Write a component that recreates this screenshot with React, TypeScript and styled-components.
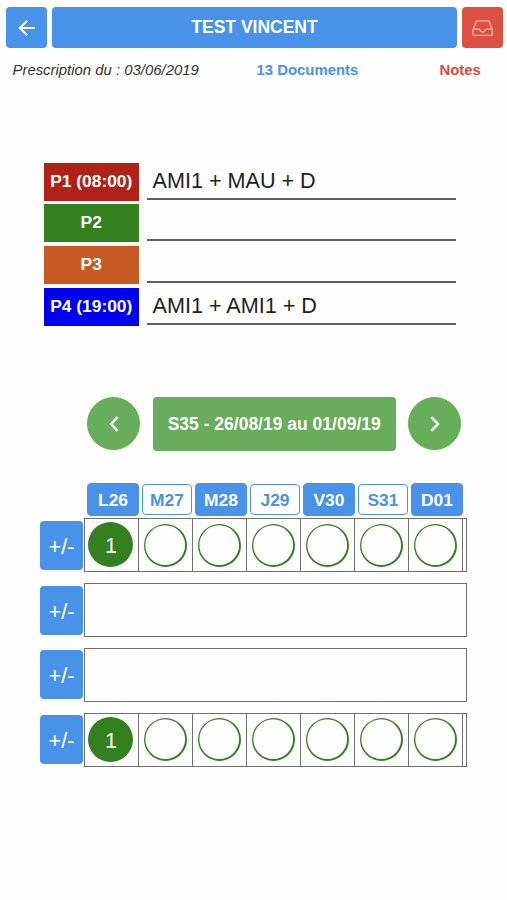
import React from "react";
import styled, { createGlobalStyle, css } from "styled-components";

const blue = "#4892e9";
const forest = "#34801f";

const GlobalStyle = createGlobalStyle`
  * { box-sizing: border-box; }
  body { margin: 0; background: #fefefe; }
`;

const Screen = styled.main`
  width: 507px;
  height: 900px;
  padding-top: 7px;
  overflow: hidden;
  background: #fefefe;
  font-family: "Liberation Sans", Arial, sans-serif;
  color: #222;
`;

const TopBar = styled.header`
  display: grid;
  grid-template-columns: 41px 405px 41px;
  column-gap: 5px;
  height: 41px;
  padding-left: 6px;
`;

const BarButton = styled.button<{ $tone?: string }>`
  display: flex;
  align-items: center;
  justify-content: center;
  height: 41px;
  padding: 0;
  border: 0;
  border-radius: 4px;
  background: ${(p) => p.$tone ?? blue};
  color: #fff;
  font: bold 17.5px "Liberation Sans", Arial, sans-serif;
`;

const SubBar = styled.div`
  display: grid;
  grid-template-columns: 244px 183px 1fr;
  padding-left: 12.5px;
  margin-top: 13px;
  font-size: 14.9px;
  line-height: 18px;
  white-space: nowrap;
`;

const DateLabel = styled.em`
  color: #333;
`;

const InfoLink = styled.a<{ $tone: string }>`
  color: ${(p) => p.$tone};
  font-weight: bold;
`;

const Passages = styled.section`
  display: flex;
  flex-direction: column;
  gap: 3.8px;
  margin: 83.5px 0 0 44px;
`;

const Passage = styled.div`
  display: grid;
  grid-template-columns: 94.5px 309px;
  column-gap: 8.5px;
  height: 38px;
`;

const PassageTag = styled.div<{ $tone: string }>`
  display: flex;
  align-items: center;
  justify-content: center;
  padding-bottom: 1px;
  background: ${(p) => p.$tone};
  color: #fff;
  font-size: 17.4px;
  font-weight: bold;
  white-space: nowrap;
`;

const PassageField = styled.div`
  display: flex;
  align-items: center;
  height: 37px;
  padding: 2px 0 0 5.5px;
  border-bottom: 2px solid #606060;
  font-size: 21.6px;
`;

const WeekNav = styled.nav`
  display: grid;
  grid-template-columns: 53px 243px 53px;
  column-gap: 12.7px;
  height: 54px;
  margin: 71.4px 0 0 87px;
`;

const weekFill = css`
  display: flex;
  align-items: center;
  justify-content: center;
  background: #67ad5b;
  color: #fff;
`;

const RoundButton = styled.button`
  ${weekFill}
  height: 53px;
  padding: 1px 0 0;
  border: 1px solid #55b83a;
  border-radius: 50%;
`;

const WeekLabel = styled.div`
  ${weekFill}
  padding-top: 1px;
  border-radius: 4px;
  font-size: 17.5px;
  font-weight: bold;
  white-space: nowrap;
`;

const Days = styled.div`
  display: grid;
  grid-template-columns: repeat(7, 54px);
  margin: 32px 0 0 87px;
`;

const Day = styled.div<{ $active: boolean }>`
  display: flex;
  align-items: center;
  justify-content: center;
  width: ${(p) => (p.$active ? 52 : 50)}px;
  height: ${(p) => (p.$active ? 33 : 31)}px;
  margin: ${(p) => (p.$active ? "0" : "1px 0 0 1px")};
  padding-top: 1px;
  border: 1px solid ${blue};
  border-radius: 4px;
  background: ${(p) => (p.$active ? blue : "#fff")};
  color: ${(p) => (p.$active ? "#fff" : blue)};
  font-size: 17.4px;
  font-weight: bold;
`;

const Schedule = styled.section`
  display: flex;
  flex-direction: column;
  gap: 10.8px;
  margin: 2px 0 0 40px;
`;

const ScheduleRow = styled.div`
  display: grid;
  grid-template-columns: 43px 383px;
  column-gap: 1px;
  align-items: center;
  height: 54px;
`;

const ToggleButton = styled.button`
  height: 49px;
  padding: 3px 0 0;
  border: 0;
  border-radius: 4px;
  background: ${blue};
  color: #fff;
  font: 21.6px "Liberation Sans", Arial, sans-serif;
`;

const Cells = styled.div`
  display: grid;
  grid-template-columns: repeat(7, 54px);
  height: 54px;
  border: 1px solid #717171;
`;

const Cell = styled.div`
  display: flex;
  align-items: center;
  padding-left: 5px;
  border-right: 1px solid #717171;
`;

const FilledDot = styled.div`
  display: flex;
  align-items: center;
  justify-content: center;
  width: 45px;
  height: 45px;
  margin: -1px 0 0 -1.6px;
  padding-top: 3px;
  border-radius: 50%;
  background: ${forest};
  color: #fff;
  font-size: 21.6px;
`;

const OpenDot = styled.svg`
  display: block;
  width: 43px;
  height: 43px;
`;

const days = ["L26", "M27", "M28", "J29", "V30", "S31", "D01"];

const passages = [
  { label: "P1 (08:00)", tone: "#b02118", text: "AMI1 + MAU + D", filled: true },
  { label: "P2", tone: forest, text: "", filled: false },
  { label: "P3", tone: "#c65a22", text: "", filled: false },
  { label: "P4 (19:00)", tone: "#0000f5", text: "AMI1 + AMI1 + D", filled: true },
];

const Ring = () => (
  <OpenDot viewBox="0 0 43 43" fill={forest} fillRule="evenodd">
    <path d="M21.5 0a21.5 21.5 0 1 0 0 43a21.5 21.5 0 1 0 0-43ZM21.2 1.3a19.9 19.9 0 1 1 0 39.8a19.9 19.9 0 1 1 0-39.8Z" />
  </OpenDot>
);

const Chevron = ({ d }: { d: string }) => (
  <svg width="12" height="18" viewBox="0 0 12 18" fill="none" stroke="#fff" strokeWidth="2.4">
    <path d={d} />
  </svg>
);

export default function App() {
  return (
    <>
      <GlobalStyle />
      <Screen>
        <TopBar>
          <BarButton aria-label="Retour">
            <svg width="18" height="18" viewBox="0 0 18 18" fill="none" stroke="#fff" strokeWidth="2">
              <path d="M9 1.8 1.9 9 9 16.2M2.1 9h14.6" />
            </svg>
          </BarButton>
          <BarButton>TEST VINCENT</BarButton>
          <BarButton $tone="#de5042" aria-label="Documents">
            <svg width="22" height="18" viewBox="0 0 22 18" fill="none" stroke="#f6bcb2" strokeWidth="1.3" strokeLinejoin="round">
              <path d="M1.2 10.2 4.6 1.8h12.2l3.4 8.4v6.1h-19ZM1.2 10.2h5.8c.7 0 1 .5 1.2 1.1.5 1.1 1.3 1.8 2.5 1.8s2-.7 2.5-1.8c.2-.6.5-1.1 1.2-1.1h5.8" />
            </svg>
          </BarButton>
        </TopBar>
        <SubBar>
          <DateLabel>Prescription du : 03/06/2019</DateLabel>
          <InfoLink $tone={blue}>13 Documents</InfoLink>
          <InfoLink $tone="#d94a40">Notes</InfoLink>
        </SubBar>
        <Passages>
          {passages.map((p) => (
            <Passage key={p.label}>
              <PassageTag $tone={p.tone}>{p.label}</PassageTag>
              <PassageField>{p.text}</PassageField>
            </Passage>
          ))}
        </Passages>
        <WeekNav>
          <RoundButton aria-label="Semaine précédente">
            <Chevron d="M9.6 2.2 3 9l6.6 6.8" />
          </RoundButton>
          <WeekLabel>S35 - 26/08/19 au 01/09/19</WeekLabel>
          <RoundButton aria-label="Semaine suivante">
            <Chevron d="M2.4 2.2 9 9l-6.6 6.8" />
          </RoundButton>
        </WeekNav>
        <Days>
          {days.map((day, i) => (
            <Day key={day} $active={i % 2 === 0}>{day}</Day>
          ))}
        </Days>
        <Schedule>
          {passages.map((p) => (
            <ScheduleRow key={p.label}>
              <ToggleButton>+/-</ToggleButton>
              <Cells>
                {p.filled &&
                  days.map((day, i) => (
                    <Cell key={day}>{i === 0 ? <FilledDot>1</FilledDot> : <Ring />}</Cell>
                  ))}
              </Cells>
            </ScheduleRow>
          ))}
        </Schedule>
      </Screen>
    </>
  );
}
